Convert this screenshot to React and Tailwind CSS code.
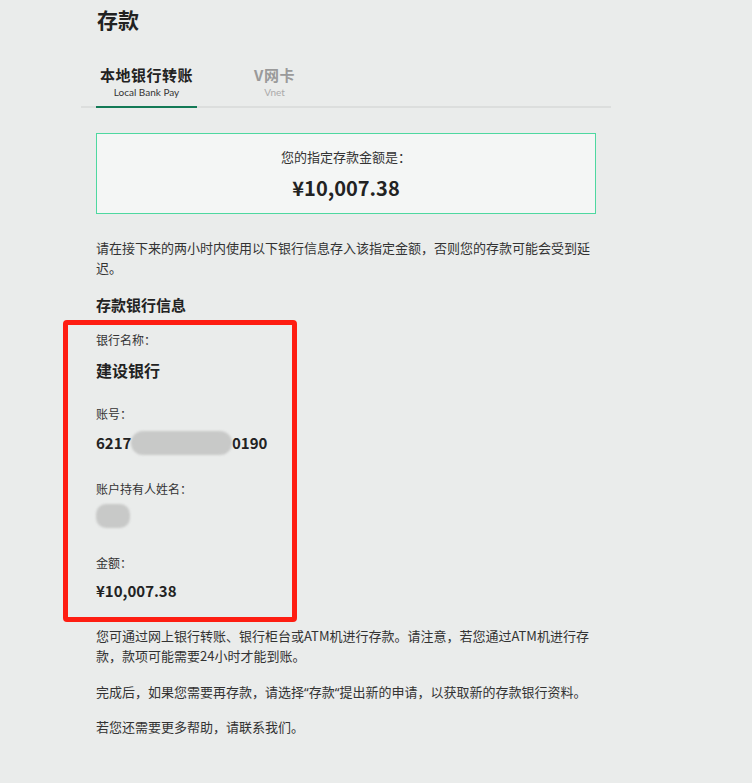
export default function App() {
  return (
    <div
      className="relative min-h-screen bg-[#eaeceb] text-[#333]"
      style={{ fontFamily: '"Noto Sans CJK SC", "Noto Sans", sans-serif' }}
    >
      <div className="ml-[81px] w-[530px]">
        {/* TITLE */}
        <h1 className="pl-[16px] pt-[4px] text-[21px] leading-[30px] font-bold text-[#222]">
          存款
        </h1>

        {/* TABS */}
        <div className="mt-[32px] flex gap-[27px] border-b-2 border-[#dcdedd] pl-[15px]">
          <div className="-mb-[2px] flex w-[101px] flex-col items-center border-b-2 border-[#137a56] pb-[7px]">
            <span className="text-[15px] leading-[18px] font-bold tracking-[0.5px] text-[#222]">
              本地银行转账
            </span>
            <span className="mt-[1px] text-[10px] leading-[14px] text-[#333]" style={{ fontFamily: "Lato, sans-serif" }}>
              Local Bank Pay
            </span>
          </div>
          <div className="flex w-[101px] flex-col items-center pb-[7px]">
            <span className="text-[15px] leading-[18px] font-bold tracking-[0.5px] text-[#9a9a9a]">
              V网卡
            </span>
            <span className="mt-[1px] text-[10px] leading-[14px] text-[#aaa]" style={{ fontFamily: "Lato, sans-serif" }}>
              Vnet
            </span>
          </div>
        </div>
      </div>

      <div className="ml-[96px] w-[500px]">
        {/* AMOUNT BOX */}
        <div className="mt-[25px] flex flex-col items-center border border-[#4ed8a0] bg-[#f4f6f5] pt-[13px] pb-[13px]">
          <p className="text-[13px] leading-[20px]">您的指定存款金额是：</p>
          <p className="mt-[9px] text-[20px] leading-[24px] font-bold text-[#222]">¥10,007.38</p>
        </div>

        <p className="mt-[24px] text-[13px] leading-[20px]">
          请在接下来的两小时内使用以下银行信息存入该指定金额，否则您的存款可能会受到延迟。
        </p>

        <h2 className="mt-[17px] text-[15px] leading-[20px] font-bold text-[#222]">存款银行信息</h2>

        {/* BANK INFO */}
        <p className="mt-[16px] text-[12px] leading-[18px]">银行名称：</p>
        <p className="mt-[11px] text-[16px] leading-[20px] font-bold text-[#222]">建设银行</p>

        <p className="mt-[25px] text-[12px] leading-[18px]">账号：</p>
        <p className="mt-[10px] flex h-[20px] items-center text-[15px] leading-[20px] font-bold text-[#222]">
          <span className="w-[35px]">6217</span>
          <span className="h-[24px] w-[101px] shrink-0 rounded-full bg-[#c8c9c8] blur-[1px]" />
          <span>0190</span>
        </p>

        <p className="mt-[27px] text-[12px] leading-[18px]">账户持有人姓名：</p>
        <div className="mt-[6px] h-[24px] w-[34px] rounded-[10px] bg-[#c8c9c8] blur-[1px]" />

        <p className="mt-[26px] text-[12px] leading-[18px]">金额：</p>
        <p className="mt-[9px] text-[15px] leading-[20px] font-bold text-[#222]">¥10,007.38</p>

        {/* NOTES */}
        <p className="mt-[25px] text-[13px] leading-[20px]">
          您可通过网上银行转账、银行柜台或ATM机进行存款。请注意，若您通过ATM机进行存
          <br />
          款，款项可能需要24小时才能到账。
        </p>
        <p className="mt-[16px] text-[13px] leading-[20px]">
          完成后，如果您需要再存款，请选择
          <span style={{ fontFamily: '"Noto Sans", sans-serif' }}>“</span>存款
          <span style={{ fontFamily: '"Noto Sans", sans-serif' }}>“</span>
          提出新的申请，以获取新的存款银行资料。
        </p>
        <p className="mt-[15px] text-[13px] leading-[20px]">若您还需要更多帮助，请联系我们。</p>
      </div>

      {/* RED ANNOTATION */}
      <div className="pointer-events-none absolute top-[320px] left-[63px] h-[302px] w-[234px] rounded-[4px] border-[5px] border-[#fe1d12]" />
    </div>
  );
}
